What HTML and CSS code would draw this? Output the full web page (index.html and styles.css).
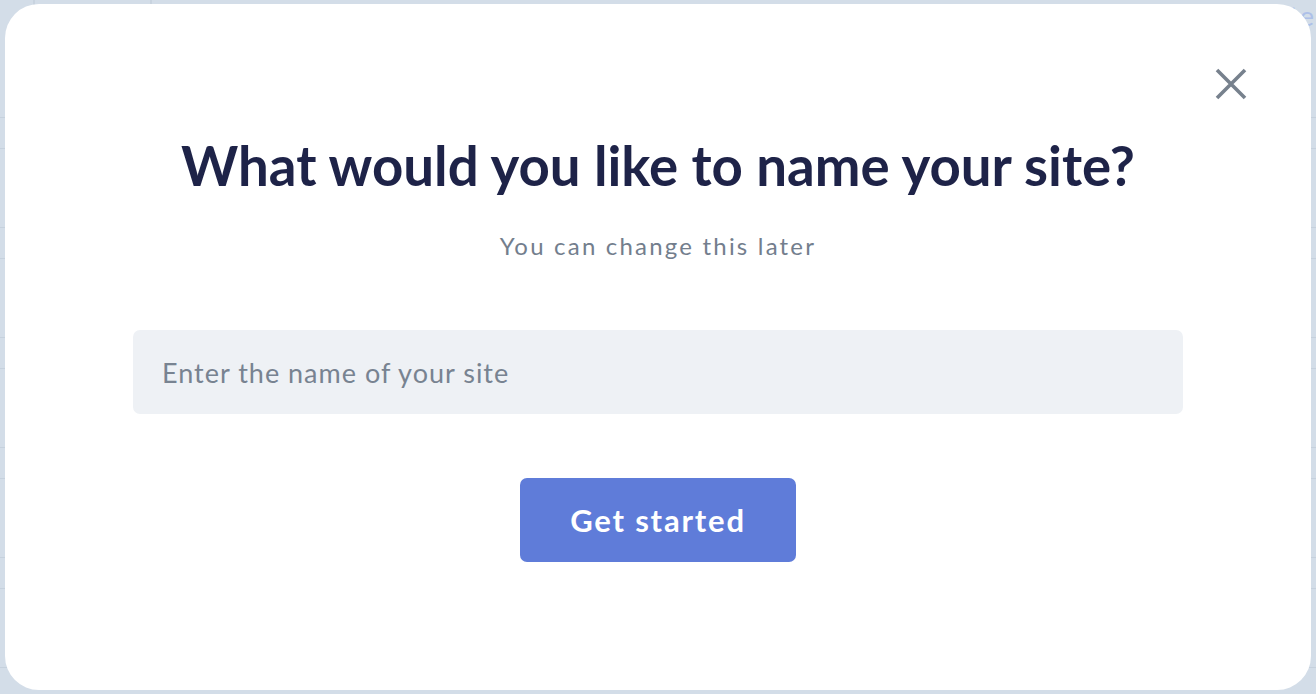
FILE: index.html
```html
<!DOCTYPE html>
<html lang="en">
<head>
    <meta charset="UTF-8">
    <meta name="viewport" content="width=device-width, initial-scale=1.0">
    <title>Name your site</title>
    <link rel="stylesheet" href="styles.css">
</head>
<body>

    <!-- Page behind the overlay, barely visible at the edges -->
    <div class="backdrop">
        <div class="backdrop-head">
            <span class="backdrop-col"></span>
            <span class="backdrop-col"></span>
            <span class="backdrop-link">Site</span>
        </div>
        <div class="backdrop-row"></div>
        <div class="backdrop-row"></div>
        <div class="backdrop-row"></div>
        <div class="backdrop-row"></div>
        <div class="backdrop-row"></div>
    </div>

    <div class="modal">
        <button class="close-button" type="button" aria-label="Close">
            <svg width="32" height="32" viewBox="0 0 32 32">
                <path d="M2 2 L30 30 M30 2 L2 30" stroke="#77818d" stroke-width="3.6" fill="none"/>
            </svg>
        </button>

        <h1 class="modal-title">What would you like to name your site?</h1>
        <p class="modal-subtitle">You can change this later</p>

        <form class="site-form">
            <input type="text" class="site-input" placeholder="Enter the name of your site" autocomplete="off">
            <button type="submit" class="start-button">Get started</button>
        </form>
    </div>

</body>
</html>
```

FILE: styles.css
```css
body {
    font-family: Lato, "Open Sans", Arial, sans-serif;
    margin: 0;
    padding: 0;
    background-color: #d3dde8;
    width: 1316px;
    height: 694px;
    overflow: hidden;
    position: relative;
}

/* --- Background page --- */
.backdrop {
    display: flex;
    flex-direction: column;
}
.backdrop-head {
    height: 118px;
    display: flex;
    border-bottom: 1px solid #c6d1dd;
    box-sizing: border-box;
}
.backdrop-col {
    width: 33px;
    border-right: 2px solid #c8d3df;
}
.backdrop-col + .backdrop-col {
    width: 115px;
}
.backdrop-link {
    margin-left: auto;
    margin-right: 1px;
    font-size: 27px;
    line-height: 32px;
    letter-spacing: 1px;
    color: #adc0e8;
}
.backdrop-row {
    height: 110px;
    box-sizing: border-box;
    border-top: 30px solid transparent;
    background-image: linear-gradient(#c6d1dd, #c6d1dd);
    background-size: 100% 1px;
    background-repeat: no-repeat;
    background-position: 0 0;
    border-bottom: 1px solid #c6d1dd;
}

/* --- Modal (sits over the page) --- */
.modal {
    position: absolute;
    left: 5px;
    top: 4px;
    width: 1306px;
    height: 686px;
    box-sizing: border-box;
    padding: 0 128px;
    background: #ffffff;
    border-radius: 34px;
    display: flex;
    flex-direction: column;
    align-items: center;
}
.close-button {
    position: absolute;
    top: 64px;
    right: 64px;
    width: 32px;
    height: 32px;
    padding: 0;
    border: none;
    background: none;
    cursor: pointer;
}
.close-button svg { display: block; }

.modal-title {
    margin: 129px 0 0;
    font-size: 54.6px;
    line-height: 64px;
    font-weight: 700;
    color: #1e2348;
    text-align: center;
}
.modal-subtitle {
    margin: 34px 0 0;
    font-size: 24px;
    line-height: 30px;
    letter-spacing: 2.2px;
    color: #737e8d;
    text-align: center;
}

.site-form {
    width: 100%;
    margin-top: 69px;
    display: flex;
    flex-direction: column;
    align-items: center;
    gap: 64px;
}
.site-input {
    width: 100%;
    height: 84px;
    box-sizing: border-box;
    padding: 0 29px;
    border: none;
    border-radius: 7px;
    background-color: #eef1f5;
    font-family: inherit;
    font-size: 27px;
    letter-spacing: 1px;
    color: #1e2348;
    outline: none;
}
.site-input::placeholder { color: #788391; }

.start-button {
    width: 276px;
    height: 84px;
    border: none;
    border-radius: 7px;
    background-color: #5f7cd9;
    color: #ffffff;
    font-family: inherit;
    font-size: 31px;
    font-weight: 700;
    letter-spacing: 1.8px;
    cursor: pointer;
}
```
